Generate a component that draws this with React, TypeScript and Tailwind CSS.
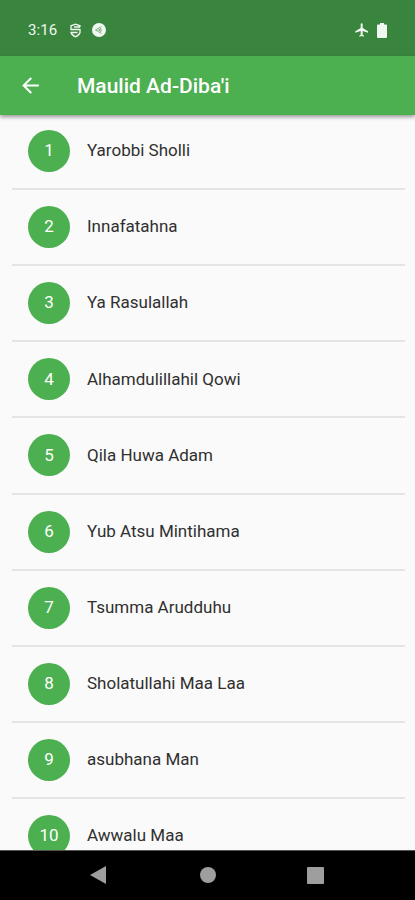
const songs = [
  'Yarobbi Sholli',
  'Innafatahna',
  'Ya Rasulallah',
  'Alhamdulillahil Qowi',
  'Qila Huwa Adam',
  'Yub Atsu Mintihama',
  'Tsumma Arudduhu',
  'Sholatullahi Maa Laa',
  'asubhana Man',
  'Awwalu Maa',
]

function StatusBar() {
  return (
    <div className="flex h-14 shrink-0 items-center bg-[#3a853d] pt-1 pr-7 pl-7 text-[#f1f8f1]">
      <span className="text-[15px] tracking-[0.1px]">3:16</span>
      <svg className="ml-3" width="13" height="15" viewBox="0 0 13 15" fill="none" stroke="currentColor" strokeWidth="1.3">
        <path d="M11 4V2.800L6.500 1.200L2 2.800V6.500H11V9.500Q10.500 12 6.500 13.800Q2.500 12 2 9.500H8.500M5 4H11" />
      </svg>
      <svg className="ml-2.5" width="14" height="14" viewBox="0 0 14 14">
        <circle cx="7" cy="7" r="7" fill="currentColor" />
        <path d="M9.500 3.500L3.500 7L9.500 10.500M9 5.500L6.500 7L9 8.500z" stroke="#6fa671" strokeWidth="0.9" fill="none" />
      </svg>
      <svg className="ml-auto" width="16" height="16" viewBox="0 0 24 24" fill="currentColor">
        <path d="M21 16v-2l-8-5V3.500a1.500 1.500 0 0 0-3 0V9l-8 5v2l8-2.500V19l-2 1.500V22l3.500-1 3.500 1v-1.500L13 19v-5.500z" />
      </svg>
      <svg className="ml-[7px]" width="10" height="15" viewBox="0 0 10 15" fill="currentColor">
        <path d="M3 0h4v1.500h2q1 0 1 1V14q0 1-1 1H1q-1 0-1-1V2.500q0-1 1-1h2z" />
      </svg>
    </div>
  )
}

export default function App() {
  return (
    <div className="flex h-[900px] w-full flex-col overflow-hidden bg-[#fafafa] font-['Roboto',sans-serif]">
      <StatusBar />
      <header className="z-10 flex h-[59px] shrink-0 items-center bg-[#4caf50] pl-[18px] text-white shadow-[0_2px_4px_rgba(0,0,0,0.4)]">
        <svg width="25" height="25" viewBox="0 0 24 24" fill="currentColor">
          <path d="M20 11H7.830l5.590-5.590L12 4l-8 8 8 8 1.410-1.410L7.830 13H20v-2z" />
        </svg>
        <h1 className="ml-[34px] pt-0.5 text-[21px] font-medium">Maulid Ad-Diba'i</h1>
      </header>

      <ul className="-mt-[1.200px] min-h-0 flex-1 overflow-hidden pr-2.5 pl-3">
        {songs.map((song, i) => (
          <li key={song} className="flex h-[76.150px] items-center border-b-2 border-[#e4e4e4] pl-4">
            <span className="flex size-[42px] items-center justify-center rounded-full bg-[#4caf50] text-[17px] text-white">
              {i + 1}
            </span>
            <span className="ml-[17px] text-[17px] text-[#303030]">{song}</span>
          </li>
        ))}
      </ul>

      <nav className="flex h-[50px] shrink-0 items-center border-t border-[#555] bg-black pb-px text-[#9e9e9e]">
        <svg className="ml-[90px]" width="16" height="18" viewBox="0 0 16 18" fill="currentColor">
          <path d="M16 0v18L0 9z" />
        </svg>
        <span className="ml-[94px] size-4 rounded-full bg-[#9e9e9e]" />
        <span className="ml-[91px] size-[17px] rounded-[1px] bg-[#9e9e9e]" />
      </nav>
    </div>
  )
}
